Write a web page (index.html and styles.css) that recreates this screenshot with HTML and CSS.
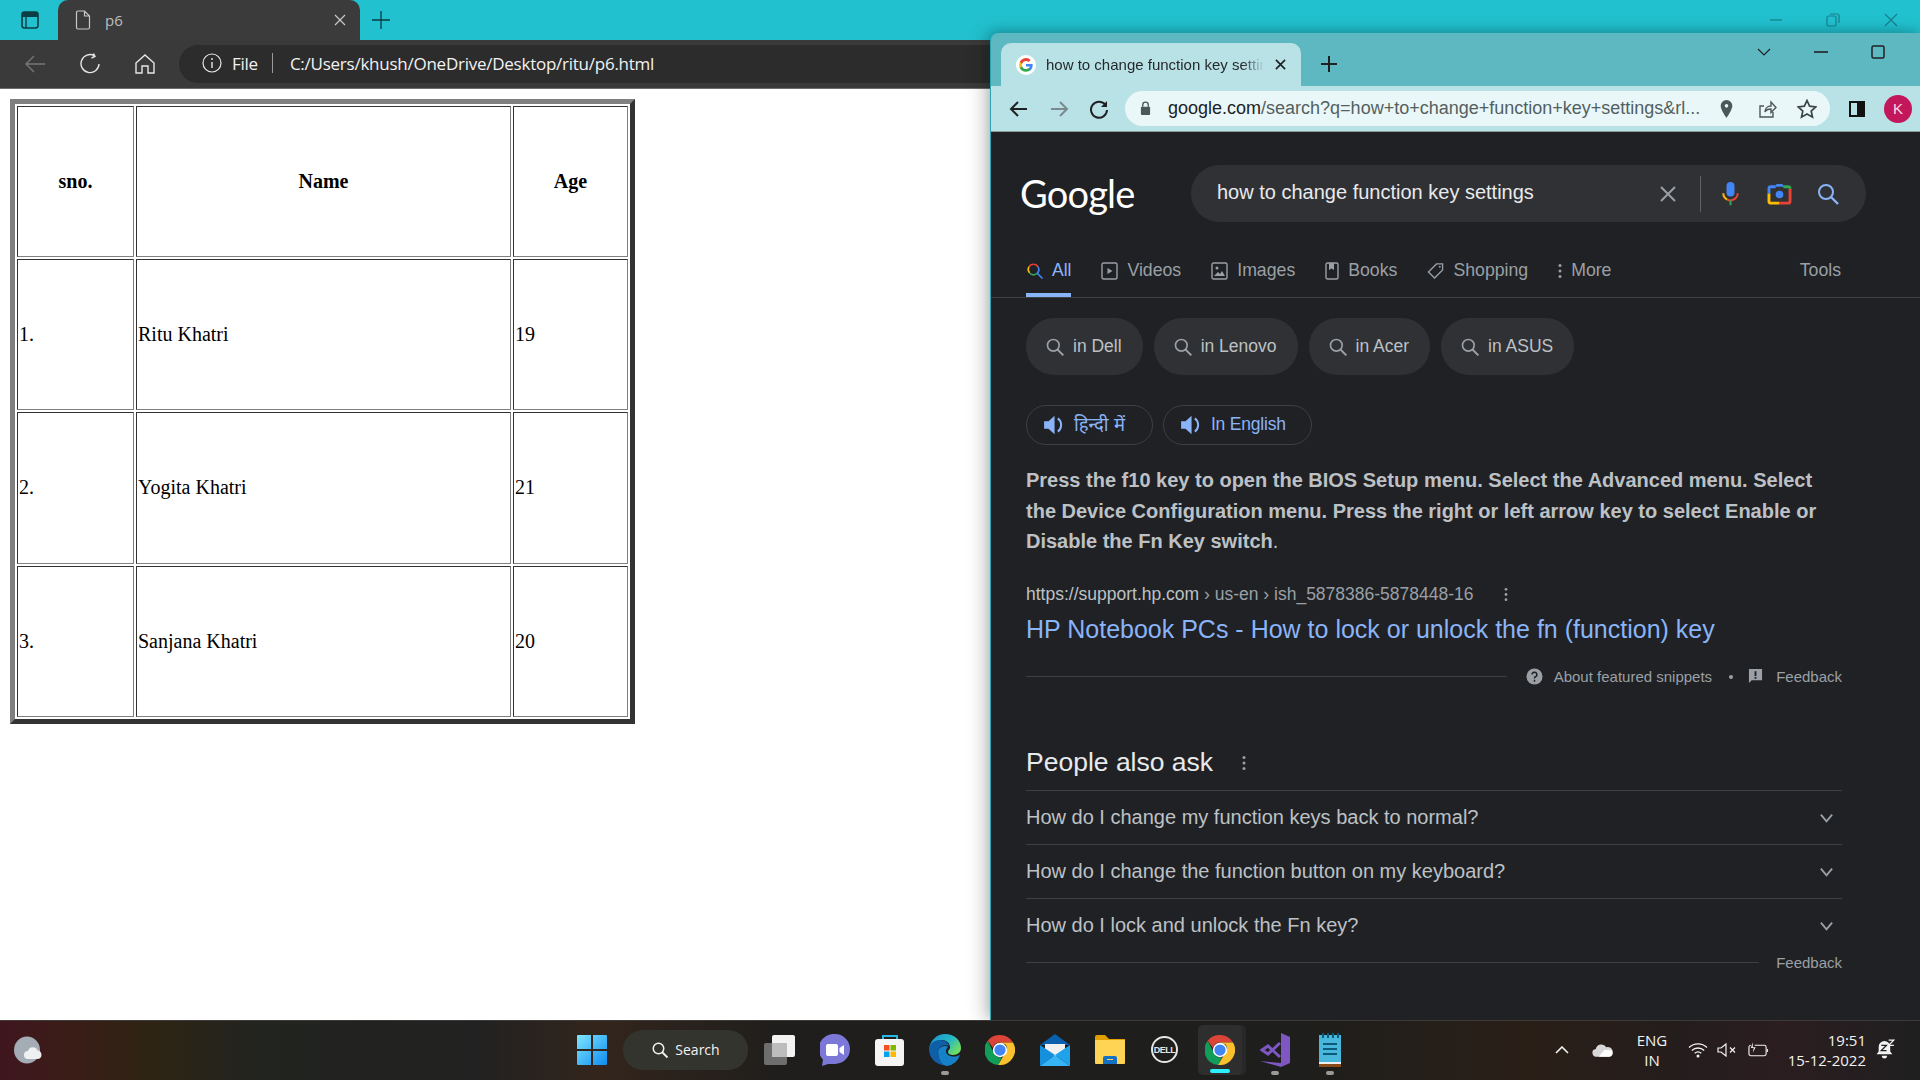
FILE: index.html
```html
<!DOCTYPE html>
<html lang="en">
<head>
<meta charset="utf-8">
<title>p6</title>
<link rel="stylesheet" href="styles.css">
</head>
<body>
<svg class="defs" width="0" height="0">
  <symbol id="chrome" viewBox="0 0 48 48">
    <path fill="#db4437" d="M24 0a24 24 0 0 1 20.8 12H24a12 12 0 0 0-11.4 8.3L4.4 9A24 24 0 0 1 24 0z"/>
    <path fill="#0f9d58" d="M4.4 9l10.2 21A12 12 0 0 0 27 35.6L21 48A24 24 0 0 1 4.4 9z"/>
    <path fill="#fbc02d" d="M44.8 12A24 24 0 0 1 21 47.8L31.4 30A12 12 0 0 0 33 15l-9-3z"/>
    <circle cx="24" cy="24" r="11.5" fill="#fff"/>
    <circle cx="24" cy="24" r="9" fill="#4285f4"/>
  </symbol>
  <symbol id="mag" viewBox="0 0 24 24">
    <circle cx="10" cy="10" r="7" fill="none" stroke="currentColor" stroke-width="2"/>
    <path d="M15 15l7 7" fill="none" stroke="currentColor" stroke-width="2.4"/>
  </symbol>
  <symbol id="spk" viewBox="0 0 20 20">
    <path fill="currentColor" d="M1 6.500h4l5.500-5v17l-5.500-5H1z"/>
    <path fill="none" stroke="currentColor" stroke-width="1.800" d="M13.500 4a7.500 7.500 0 0 1 0 12"/>
  </symbol>
  <symbol id="chev" viewBox="0 0 16 16">
    <path fill="none" stroke="currentColor" stroke-width="2" d="M2 5l6 7 6-7"/>
  </symbol>
  <symbol id="kebab" viewBox="0 0 4 16">
    <circle cx="2" cy="2.5" r="1.5" fill="currentColor"/><circle cx="2" cy="8" r="1.5" fill="currentColor"/><circle cx="2" cy="13.5" r="1.5" fill="currentColor"/>
  </symbol>
</svg>

<div class="desktop">
  <div class="main">
    <header class="ltabs">
      <svg class="l-side" viewBox="0 0 18 18" width="18" height="18"><rect x="1" y="1" width="16" height="16" rx="2.5" fill="none" stroke="#0c3d44" stroke-width="1.6"/><path d="M1 3.500a2.500 2.500 0 0 1 2.500-2.500h11a2.500 2.500 0 0 1 2.500 2.500V6H1z" fill="#0c3d44"/><path d="M5 6v11" stroke="#0c3d44" stroke-width="1.4"/></svg>
      <div class="ltab">
        <svg viewBox="0 0 16 20" width="16" height="20"><path d="M1.500 2.500a1.500 1.500 0 0 1 1.500-1.500h6.500l5 5v11.500a1.500 1.500 0 0 1-1.500 1.500H3a1.500 1.500 0 0 1-1.500-1.500z M9.500 1v5h5" fill="none" stroke="#c8c8c8" stroke-width="1.200"/></svg>
        <span class="ltab-title">p6</span>
        <svg class="ltab-x" viewBox="0 0 12 12" width="12" height="12"><path d="M1 1l10 10M11 1L1 11" stroke="#c8c8c8" stroke-width="1.200"/></svg>
      </div>
      <svg class="l-plus" viewBox="0 0 18 18" width="18" height="18"><path d="M9 0v18M0 9h18" stroke="#0c3d44" stroke-width="1.300"/></svg>
    </header>
    <nav class="lbar">
      <svg class="l-ic" viewBox="0 0 22 22" width="22" height="22"><path d="M21 11H2M10 3l-8 8 8 8" fill="none" stroke="#777" stroke-width="1.400"/></svg>
      <svg class="l-ic" viewBox="0 0 22 22" width="22" height="22"><path d="M15.500 2.800A9 9 0 1 0 20 11M14.500 0.500l1.500 3-3.500 1.500" fill="none" stroke="#e6e6e6" stroke-width="1.400"/></svg>
      <svg class="l-ic" viewBox="0 0 22 22" width="22" height="22"><path d="M2 10l9-8 9 8v10h-6v-7H8v7H2z" fill="none" stroke="#e6e6e6" stroke-width="1.400"/></svg>
      <div class="lpill">
        <svg viewBox="0 0 20 20" width="20" height="20"><circle cx="10" cy="10" r="9" fill="none" stroke="#e6e6e6" stroke-width="1.200"/><path d="M10 9v6M10 5v2" stroke="#e6e6e6" stroke-width="1.400"/></svg>
        <span class="lfile">File</span>
        <span class="lsep"></span>
        <span class="lurl">C:/Users/khush/OneDrive/Desktop/ritu/p6.html</span>
      </div>
    </nav>
    <main class="lpage">
      <table class="sheet">
        <colgroup><col class="c1"><col class="c2"><col class="c3"></colgroup>
        <tr><th>sno.</th><th>Name</th><th>Age</th></tr>
        <tr><td>1.</td><td>Ritu Khatri</td><td>19</td></tr>
        <tr><td>2.</td><td>Yogita Khatri</td><td>21</td></tr>
        <tr><td>3.</td><td>Sanjana Khatri</td><td>20</td></tr>
      </table>
    </main>

    <div class="caption-btns">
      <svg viewBox="0 0 12 12" width="12" height="12"><path d="M0 6h12" stroke="#14808c" stroke-width="1.200"/></svg>
      <svg viewBox="0 0 14 14" width="14" height="14"><rect x="1" y="3" width="9" height="10" rx="1.500" fill="none" stroke="#14808c" stroke-width="1.200"/><path d="M4 1h7a2 2 0 0 1 2 2v7" fill="none" stroke="#14808c" stroke-width="1.200"/></svg>
      <svg viewBox="0 0 14 14" width="14" height="14"><path d="M1 1l12 12M13 1L1 13" stroke="#14808c" stroke-width="1.200"/></svg>
    </div>

    <section class="gwin">
      <div class="gstrip">
        <div class="gtab">
          <svg viewBox="0 0 24 24" width="20" height="20"><circle cx="12" cy="12" r="12" fill="#fff"/><path fill="#4285f4" d="M20 12.300c0-.6-.1-1.100-.2-1.600H12v3h4.500a3.800 3.800 0 0 1-1.700 2.500v2h2.700c1.600-1.400 2.500-3.500 2.500-5.900z"/><path fill="#34a853" d="M12 20c2.200 0 4-.7 5.500-2l-2.700-2a5 5 0 0 1-7.500-2.600H4.600v2.100A8 8 0 0 0 12 20z"/><path fill="#fbbc05" d="M7.300 13.400a4.800 4.800 0 0 1 0-3V8.300H4.600a8 8 0 0 0 0 7.200z"/><path fill="#ea4335" d="M12 7.200c1.200 0 2.300.4 3.100 1.200l2.400-2.400A8 8 0 0 0 4.600 8.300l2.700 2.100A4.800 4.800 0 0 1 12 7.200z"/></svg>
          <span class="gtab-title">how to change function key settings</span>
          <svg class="gtab-x" viewBox="0 0 12 12" width="11" height="11"><path d="M1 1l10 10M11 1L1 11" stroke="#202124" stroke-width="1.800"/></svg>
        </div>
        <svg class="g-plus" viewBox="0 0 16 16" width="16" height="16"><path d="M8 0v16M0 8h16" stroke="#202124" stroke-width="2"/></svg>
        <div class="g-caption">
          <svg viewBox="0 0 14 8" width="14" height="8"><path d="M1 1l6 6 6-6" fill="none" stroke="#202124" stroke-width="1.200"/></svg>
          <svg viewBox="0 0 14 2" width="14" height="2"><path d="M0 1h14" stroke="#202124" stroke-width="1.600"/></svg>
          <svg viewBox="0 0 14 14" width="14" height="14"><rect x="1" y="1" width="12" height="12" rx="1.500" fill="none" stroke="#202124" stroke-width="1.500"/></svg>
        </div>
      </div>
      <div class="gbar">
        <svg viewBox="0 0 20 20" width="20" height="20"><path d="M18 10H3M9 3l-7 7 7 7" fill="none" stroke="#202124" stroke-width="2"/></svg>
        <svg viewBox="0 0 20 20" width="20" height="20"><path d="M2 10h15M11 3l7 7-7 7" fill="none" stroke="#7c8a8d" stroke-width="2"/></svg>
        <svg viewBox="0 0 20 20" width="20" height="20"><path d="M16.500 6A8 8 0 1 0 18 11" fill="none" stroke="#202124" stroke-width="2"/><path d="M18 2v6h-6z" fill="#202124"/></svg>
        <div class="gomni">
          <svg viewBox="0 0 12 16" width="11" height="15"><rect x="1" y="6" width="10" height="9" rx="1" fill="#4c5759"/><path d="M3 6V4a3 3 0 0 1 6 0v2" fill="none" stroke="#4c5759" stroke-width="1.500"/></svg>
          <span class="gurl"><b>google.com</b>/search?q=how+to+change+function+key+settings&amp;rl...</span>
          <svg class="gpin" viewBox="0 0 14 20" width="13" height="18"><path fill-rule="evenodd" fill="#4c5759" d="M7 0a6.500 6.500 0 0 1 6.500 6.500C13.500 11 7 20 7 20S.5 11 .5 6.500A6.500 6.500 0 0 1 7 0zm0 4.500a2 2 0 1 0 0 4 2 2 0 0 0 0-4z"/></svg>
          <svg class="gshare" viewBox="0 0 20 20" width="20" height="20"><path d="M16 13v5H3V7h4M8 13c0-4 3-6 6-6V3l5 5.500-5 5V10c-3 0-5 1-6 3z" fill="none" stroke="#4c5759" stroke-width="1.400"/></svg>
          <svg viewBox="0 0 20 20" width="20" height="20"><path d="M10 1.500l2.600 5.700 6.200.7-4.600 4.200 1.300 6.100L10 15.100l-5.500 3.100 1.300-6.100L1.200 7.900l6.200-.7z" fill="none" stroke="#3b4547" stroke-width="1.700"/></svg>
        </div>
        <svg class="g-sidep" viewBox="0 0 18 18" width="18" height="18"><path fill-rule="evenodd" d="M1 1h16v16H1zM3 3v12h6V3z" fill="#111"/></svg>
        <span class="avatar">K</span>
      </div>
      <div class="gpage">
        <div class="g-head">
          <span class="logo">Google</span>
          <div class="gsearch">
            <span class="q">how to change function key settings</span>
            <svg viewBox="0 0 16 16" width="16" height="16"><path d="M1 1l14 14M15 1L1 15" stroke="#9aa0a6" stroke-width="2"/></svg>
            <span class="qsep"></span>
            <svg class="s-mic" viewBox="0 0 20 30" width="17" height="24"><rect x="5" y="0" width="10" height="18" rx="5" fill="#4285f4"/><path d="M1 14a9 9 0 0 0 5 8" fill="none" stroke="#fbbc05" stroke-width="2.500"/><path d="M6 22a9 9 0 0 0 4 1" fill="none" stroke="#ea4335" stroke-width="2.500"/><path d="M10 23a9 9 0 0 0 9-9" fill="none" stroke="#ea4335" stroke-width="2.500"/><path d="M10 23v6" stroke="#34a853" stroke-width="2.500"/></svg>
            <svg class="s-cam" viewBox="0 0 26 24" width="25" height="23"><path d="M2 12V7a2 2 0 0 1 2-2h5" fill="none" stroke="#4285f4" stroke-width="3"/><path d="M2 12v8a2 2 0 0 0 2 2h9" fill="none" stroke="#fbbc05" stroke-width="3"/><path d="M13 22h9a2 2 0 0 0 2-2V7" fill="none" stroke="#ea4335" stroke-width="3"/><path d="M24 7a2 2 0 0 0-2-2h-5" fill="none" stroke="#34a853" stroke-width="3"/><path d="M8 5l2-3h6l2 3z" fill="#4285f4"/><circle cx="13" cy="13" r="4" fill="#4285f4"/></svg>
            <svg class="s-mag" viewBox="0 0 24 24" width="24" height="24"><use href="#mag"/></svg>
          </div>
        </div>
        <div class="g-tabs">
          <span class="gt active">
            <svg viewBox="0 0 24 24" width="18" height="18"><path d="M10 3a7 7 0 0 1 6 3.500" fill="none" stroke="#ea4335" stroke-width="2.200"/><path d="M4 6.500A7 7 0 0 1 10 3" fill="none" stroke="#ea4335" stroke-width="2.200"/><path d="M3.900 6.500a7 7 0 0 0 1 8" fill="none" stroke="#fbbc05" stroke-width="2.200"/><path d="M5 15a7 7 0 0 0 10 0" fill="none" stroke="#34a853" stroke-width="2.200"/><path d="M16 6.500a7 7 0 0 1-1 8.500l7 7" fill="none" stroke="#4285f4" stroke-width="2.200"/></svg>
            All
          </span>
          <span class="gt"><svg viewBox="0 0 17 18" width="17" height="18"><rect x="1" y="1" width="15" height="16" rx="1.500" fill="none" stroke="currentColor" stroke-width="1.400"/><path d="M6.500 6l5 3-5 3z" fill="currentColor"/></svg>Videos</span>
          <span class="gt"><svg viewBox="0 0 17 18" width="17" height="18"><rect x="1" y="1" width="15" height="16" rx="1.500" fill="none" stroke="currentColor" stroke-width="1.400"/><circle cx="6" cy="6" r="1.500" fill="currentColor"/><path d="M3 14l4-4 2 2 2-3 3 5z" fill="currentColor"/></svg>Images</span>
          <span class="gt"><svg viewBox="0 0 14 18" width="14" height="18"><rect x="1" y="1" width="12" height="16" rx="1.500" fill="none" stroke="currentColor" stroke-width="1.400"/><path d="M4 1h5v7L6.500 6.500 4 8z" fill="currentColor"/></svg>Books</span>
          <span class="gt"><svg viewBox="0 0 18 18" width="17" height="18"><path d="M10 1.500h6.500V8L8 16.500 1.500 10z" fill="none" stroke="currentColor" stroke-width="1.400"/><circle cx="13.500" cy="4.500" r="1" fill="currentColor"/></svg>Shopping</span>
          <span class="gt"><svg viewBox="0 0 4 16" width="4" height="16"><use href="#kebab"/></svg>More</span>
          <span class="gt tools">Tools</span>
        </div>
        <div class="chips">
          <span class="chip"><svg viewBox="0 0 24 24" width="20" height="20"><use href="#mag"/></svg>in Dell</span>
          <span class="chip"><svg viewBox="0 0 24 24" width="20" height="20"><use href="#mag"/></svg>in Lenovo</span>
          <span class="chip"><svg viewBox="0 0 24 24" width="20" height="20"><use href="#mag"/></svg>in Acer</span>
          <span class="chip"><svg viewBox="0 0 24 24" width="20" height="20"><use href="#mag"/></svg>in ASUS</span>
        </div>
        <div class="listen">
          <span class="lchip"><svg viewBox="0 0 20 20" width="22" height="22"><use href="#spk"/></svg><span class="hi">हिन्दी में</span></span>
          <span class="lchip"><svg viewBox="0 0 20 20" width="22" height="22"><use href="#spk"/></svg>In English</span>
        </div>
        <p class="snippet"><b>Press the f10 key to open the BIOS Setup menu. Select the Advanced menu. Select the Device Configuration menu. Press the right or left arrow key to select Enable or Disable the Fn Key switch</b>.</p>
        <div class="cite"><span class="host">https://support.hp.com</span> › us-en › ish_5878386-5878448-16<svg viewBox="0 0 4 16" width="4" height="15"><use href="#kebab"/></svg></div>
        <a class="title">HP Notebook PCs - How to lock or unlock the fn (function) key</a>
        <div class="about">
          <span class="rule"></span>
          <svg viewBox="0 0 18 18" width="17" height="17"><circle cx="9" cy="9" r="8.500" fill="#9aa0a6"/><path d="M6.500 7a2.500 2.500 0 1 1 3.500 2.300c-.7.300-1 .7-1 1.700M9 12.500v2" fill="none" stroke="#202124" stroke-width="1.600"/></svg>
          <span class="ab-t">About featured snippets</span>
          <span class="ab-dot"></span>
          <svg viewBox="0 0 16 18" width="15" height="17"><path fill-rule="evenodd" fill="#9aa0a6" d="M1 1h14v12H4l-3 3zM7 3.500v5h2v-5zM7 9.500v2h2v-2z"/></svg>
          <span class="ab-t fb">Feedback</span>
        </div>
        <div class="paa-head"><span class="paa-t">People also ask</span><svg viewBox="0 0 4 16" width="4" height="16"><use href="#kebab"/></svg></div>
        <div class="q-row">How do I change my function keys back to normal?<svg viewBox="0 0 16 16" width="15" height="15"><use href="#chev"/></svg></div>
        <div class="q-row">How do I change the function button on my keyboard?<svg viewBox="0 0 16 16" width="15" height="15"><use href="#chev"/></svg></div>
        <div class="q-row last">How do I lock and unlock the Fn key?<svg viewBox="0 0 16 16" width="15" height="15"><use href="#chev"/></svg></div>
        <div class="paa-foot"><span class="rule"></span><span class="ab-t">Feedback</span></div>
      </div>
    </section>
  </div>

  <footer class="taskbar">
    <svg class="weather" viewBox="0 0 30 28" width="30" height="28"><ellipse cx="13" cy="14" rx="13" ry="13.500" fill="#a4adb5"/><path d="M14 23a4 4 0 0 1 0-8 5 5 0 0 1 9.500-.5A4.300 4.300 0 0 1 24 23z" fill="#eef0f2"/></svg>
    <svg class="start" viewBox="0 0 30 30" width="30" height="30"><defs><linearGradient id="w" x1="0" y1="0" x2="1" y2="1"><stop offset="0" stop-color="#7ee6ff"/><stop offset="1" stop-color="#0f8cf0"/></linearGradient></defs><path fill="url(#w)" d="M0 1a1 1 0 0 1 1-1h13v14H0zM16 0h13a1 1 0 0 1 1 1v13H16zM0 16h14v14H1a1 1 0 0 1-1-1zM16 16h14v13a1 1 0 0 1-1 1H16z"/></svg>
    <div class="t-search"><svg viewBox="0 0 24 24" width="18" height="18"><use href="#mag"/></svg>Search</div>
    <div class="t-apps">
      <span class="app"><svg viewBox="0 0 32 30" width="32" height="30"><rect x="0" y="8" width="23" height="22" rx="2" fill="#6e6e6e"/><rect x="8" y="0" width="23" height="22" rx="2" fill="#f3f3f3"/><rect x="8" y="8" width="15" height="14" fill="#bdbdbd"/></svg></span>
      <span class="app"><svg viewBox="0 0 30 32" width="30" height="32"><path fill="#7b78d8" d="M15 0a15 15 0 0 1 0 30H8l-6 2 1-6.500A15 15 0 0 1 15 0z"/><rect x="6" y="10" width="12" height="12" rx="2" fill="#fff"/><path d="M19.500 14l4.500-3v10l-4.500-3z" fill="#fff"/></svg></span>
      <span class="app"><svg viewBox="0 0 30 32" width="30" height="32"><path d="M8 6V2h14v4" fill="none" stroke="#29b6e8" stroke-width="2"/><rect x="0" y="5" width="29" height="27" rx="3" fill="#f5f5f5"/><rect x="9" y="11" width="5.500" height="5.500" fill="#f25022"/><rect x="15.500" y="11" width="5.500" height="5.500" fill="#7fba00"/><rect x="9" y="17.500" width="5.500" height="5.500" fill="#00a4ef"/><rect x="15.500" y="17.500" width="5.500" height="5.500" fill="#ffb900"/></svg></span>
      <span class="app on-dot"><svg viewBox="0 0 32 32" width="32" height="32"><defs><linearGradient id="e" x1="0" y1="0" x2="1" y2="0.600"><stop offset="0" stop-color="#1d8fd8"/><stop offset="0.600" stop-color="#23b8c6"/><stop offset="1" stop-color="#6fdc66"/></linearGradient></defs><path fill="url(#e)" d="M16 0c9 0 16 6 16 14 0 4-3 7-8 7-3 0-5-1-5-3 0-2 2-2 2-5 0-4-4-7-8-7-6 0-11 4-13 9C1.500 6 8 0 16 0z"/><path fill="#0f5fa8" d="M0 16C0 10 5 6 11 6c4 0 8 2 9 6-5-2-10 0-11 5-1 5 2 10 7 13 0 0 1 1 3 1A16 16 0 0 1 0 16z"/><path fill="#1680c8" d="M9 18c0-4 4-6 7-6 1 0 2 .3 3 .8-.5 1.500-2 2.200-2 4.200 0 4 4 5.500 8 5.500 2 0 4-.5 6-2A16 16 0 0 1 18 32c-5-1-9-7-9-14z"/></svg></span>
      <span class="app"><svg viewBox="0 0 30 30" width="30" height="30"><use href="#chrome"/></svg></span>
      <span class="app"><svg viewBox="0 0 30 32" width="30" height="32"><path fill="#0a5fae" d="M15 0l15 11H0z"/><path fill="#f1f1f1" d="M5 10h20v8l-10 5-10-5z"/><path fill="#1490dc" d="M0 11l15 10L0 32z"/><path fill="#1ea2ea" d="M30 11L15 21l15 11z"/><path fill="#36b4f5" d="M0 32l15-11 15 11z"/></svg></span>
      <span class="app"><svg viewBox="0 0 30 30" width="30" height="30"><path fill="#e0a100" d="M0 2a2 2 0 0 1 2-2h8l4 4h16v8H0z"/><path fill="#ffd454" d="M0 5h30v23a1 1 0 0 1-1 1H1a1 1 0 0 1-1-1z"/><path fill="#1471c4" d="M8 29v-6a2 2 0 0 1 2-2h10a2 2 0 0 1 2 2v6zM12 24v1h6v-1z"/></svg></span>
      <span class="app"><span class="dell"><span class="dell-t">DELL</span></span></span>
      <span class="app running"><svg viewBox="0 0 30 30" width="30" height="30"><use href="#chrome"/></svg></span>
      <span class="app on-dot"><svg viewBox="0 0 30 34" width="30" height="34"><path fill="#7e57c2" d="M21 0l9 4v26l-9 4L0 28l21 2z"/><path d="M20 10L8 21l-6-4 6-4 12 11" fill="none" stroke="#7e57c2" stroke-width="3"/></svg></span>
      <span class="app on-dot"><svg viewBox="0 0 22 34" width="22" height="34"><rect x="0" y="2" width="22" height="32" fill="#8a4b1a"/><rect x="0" y="2" width="22" height="29" fill="#49b7dc"/><rect x="0" y="29" width="22" height="2" fill="#eee"/><path d="M4 0v5M9 0v5M14 0v5M19 0v5" stroke="#0d5a78" stroke-width="2"/><path d="M4 11h14M4 16h14M4 21h14" stroke="#0d5a78" stroke-width="2"/></svg></span>
    </div>
    <div class="tray">
      <svg class="tr-up" viewBox="0 0 14 8" width="14" height="8"><path d="M1 7l6-6 6 6" fill="none" stroke="#f2f2f2" stroke-width="1.600"/></svg>
      <svg class="tr-cloud" viewBox="0 0 22 14" width="21" height="14"><path d="M5 14a4 4 0 0 1-1-8A6 6 0 0 1 15 4a4.500 4.500 0 0 1 3 10z" fill="#d8d8d8"/><path d="M7 14l6-7 5 0a3 3 0 0 1 0 7z" fill="#fff"/></svg>
      <span class="lang">ENG<br>IN</span>
      <svg class="tr-wifi" viewBox="0 0 20 16" width="20" height="16"><path d="M1 5.500a13 13 0 0 1 18 0M3.800 8.500a9 9 0 0 1 12.400 0M6.700 11.300a5 5 0 0 1 6.600 0" fill="none" stroke="#f2f2f2" stroke-width="1.300"/><circle cx="10" cy="14" r="1.500" fill="#f2f2f2"/></svg>
      <svg class="tr-vol" viewBox="0 0 20 14" width="20" height="14"><path d="M1 5h3l5-4v12l-5-4H1z" fill="none" stroke="#f2f2f2" stroke-width="1.200"/><path d="M13 4.500l5 5M18 4.500l-5 5" stroke="#f2f2f2" stroke-width="1.200"/></svg>
      <svg class="tr-bat" viewBox="0 0 22 16" width="21" height="16"><path d="M7 3h10a2 2 0 0 1 2 2v7a2 2 0 0 1-2 2H3a2 2 0 0 1-2-2V5a2 2 0 0 1 2-2" fill="none" stroke="#f2f2f2" stroke-width="1.200"/><path d="M20 7h1v3h-1z" fill="#f2f2f2"/><path d="M5 0L3 6h3l-1 5 3-6H5z" fill="#f2f2f2"/></svg>
      <span class="clock">19:51<br>15-12-2022</span>
      <svg class="tr-bell" viewBox="0 0 18 20" width="19" height="21"><path d="M8 2a5.500 5.500 0 0 1 5.500 5.500V12l2 2.500H.5L2.500 12V7.500A5.500 5.500 0 0 1 8 2z" fill="#f2f2f2"/><path d="M5.500 16h5a2.500 2.500 0 0 1-5 0z" fill="#f2f2f2"/><path d="M5 6h5l-5 5h5" fill="none" stroke="#1f1f1f" stroke-width="1.200"/><path d="M12 1h5l-5 5h5" fill="none" stroke="#f2f2f2" stroke-width="1.200"/></svg>
    </div>
  </footer>
</div>
</body>
</html>
```

FILE: styles.css
```css
* { box-sizing: border-box; }
html, body { margin: 0; height: 100%; overflow: hidden; }
body { font-family: "Liberation Sans", Arial, sans-serif; background: #fff; }
.defs { display: block; position: absolute; }
svg { flex: none; display: block; }

.desktop { height: 1080px; display: flex; flex-direction: column; }
.main { flex: 1; position: relative; display: flex; flex-direction: column; min-height: 0; }

/* back window */
.ltabs { height: 40px; background: #22c1cf; display: flex; align-items: center; padding-left: 21px; }
.ltab { margin-left: 19px; width: 302px; height: 40px; background: #3b3b3b; border-radius: 10px 10px 0 0; display: flex; align-items: center; padding-left: 17px; }
.ltab-title { margin-left: 14px; color: #bdbdbd; font: 15px "Open Sans", sans-serif; }
.ltab-x { margin-left: auto; margin-right: 14px; }
.l-plus { margin-left: 12px; }
.lbar { height: 49px; background: #3a3a3a; border-bottom: 1px solid #6d6d6d; display: flex; align-items: center; padding: 0 0 0 24px; gap: 33px; }
.lpill { margin-left: -10px; width: 830px; height: 38px; border-radius: 19px; background: #2c2c2c; display: flex; align-items: center; padding: 0 0 2px 23px; color: #f2f2f2; font: 17px "Open Sans", sans-serif; letter-spacing: -0.250px; }
.lfile { margin-left: 10px; }
.lsep { width: 1px; height: 20px; background: #9a9a9a; margin: 0 17px 0 14px; }
.lpage { flex: 1; padding: 10px; }
.sheet { table-layout: fixed; width: 625px; border-collapse: separate; border-spacing: 2px; border: 5px solid; border-color: #808080 #333 #333 #808080; font: 20px "Liberation Serif", "Times New Roman", serif; color: #000; }
.c1 { width: 117px; } .c2 { width: 375px; } .c3 { width: 115px; }
.sheet th, .sheet td { height: 151.200px; padding: 1px; border: 1px solid; border-color: #333 #808080 #808080 #333; }
.sheet th { text-align: center; font-weight: bold; }
.sheet td { text-align: left; }

.caption-btns { position: absolute; top: 13px; left: 1770px; display: flex; align-items: center; gap: 44px; }

/* front window */
.gwin { position: absolute; left: 990px; top: 33px; right: 0; bottom: 0; display: flex; flex-direction: column; border-radius: 8px 0 0 0; border-left: 1px solid #2aa4b0; box-shadow: -6px 0 18px rgba(0,0,0,.22), 0 -3px 8px rgba(0,80,90,.18); }
.gstrip { height: 53px; background: #5db8c1; border-radius: 8px 0 0 0; display: flex; align-items: flex-start; padding-left: 10px; position: relative; }
.gtab { margin-top: 10px; width: 300px; height: 43px; background: #b9e2e7; border-radius: 10px 10px 0 0; display: flex; align-items: center; padding: 0 15px 0 15px; }
.gtab-title { margin-left: 10px; width: 218px; overflow: hidden; white-space: nowrap; font-size: 15px; color: #26292b; -webkit-mask-image: linear-gradient(90deg, #000 90%, transparent); mask-image: linear-gradient(90deg, #000 90%, transparent); }
.gtab-x { margin-left: auto; }
.g-plus { margin: 23px 0 0 20px; }
.g-caption { margin: 12px 0 0 auto; display: flex; align-items: center; gap: 43px; padding-right: 35px; height: 14px; }
.gbar { height: 46px; background: #b9e2e7; border-bottom: 1px solid #8d9a9c; display: flex; align-items: center; padding-left: 18px; gap: 20px; }
.gomni { margin-left: -4px; width: 705px; height: 35px; border-radius: 18px; background: #eaf7f8; display: flex; align-items: center; padding-left: 15px; gap: 20px; }
.gurl { margin-left: -3px; width: 532px; white-space: nowrap; font-size: 18px; color: #53605f; }
.gurl b { font-weight: normal; color: #202124; }
.gshare { margin-left: 4px; }
.g-sidep { margin-left: -2px; }
.avatar { margin-left: -2px; width: 28px; height: 28px; border-radius: 50%; background: #c2185b; color: #f6dce6; font-size: 15px; display: flex; align-items: center; justify-content: center; }

.gpage { flex: 1; background: #202124; display: flex; flex-direction: column; min-height: 0; color: #bdc1c6; }
.g-head { padding: 33px 54px 0 29px; display: flex; align-items: center; }
.logo { width: 171px; font: 38px/57px Lato, sans-serif; color: #fff; letter-spacing: -0.800px; }
.gsearch { flex: 1; height: 57px; border-radius: 29px; background: #303134; display: flex; align-items: center; padding-left: 26px; color: #e8eaed; font-size: 20px; }
.q { width: 443px; padding-bottom: 2px; }
.gsearch > svg { color: #8ab4f8; }
.qsep { width: 1px; height: 36px; background: #5f6368; margin: 0 21px 0 24px; }
.s-cam { margin-left: 28px; }
.s-mag { margin-left: 24px; }

.g-tabs { margin-top: 0; height: 76px; border-bottom: 1px solid #3c4043; display: flex; align-items: center; padding: 22px 79px 0 35px; gap: 30px; color: #9aa0a6; font-size: 17.700px; }
.gt { height: 53px; display: flex; align-items: center; gap: 9px; }
.gt.active { color: #8ab4f8; border-bottom: 4px solid #8ab4f8; padding-top: 4px; gap: 8px; font-size: 17.500px; }
.tools { margin-left: auto; }

.chips { margin: 20px 0 0 35px; display: flex; gap: 11px; }
.chip { height: 57px; padding: 0 21px 0 19px; border-radius: 28px; background: #303134; display: flex; align-items: center; gap: 8px; font-size: 17.500px; color: #bdc1c6; }
.chip svg { color: #9aa0a6; }
.listen { margin: 30px 0 0 35px; display: flex; gap: 10px; }
.lchip { height: 40px; padding: 0 25px 2px 16px; border: 1px solid #3c4043; border-radius: 20px; display: flex; align-items: center; gap: 9px; font-size: 17.500px; color: #8ab4f8; letter-spacing: -0.200px; }
.lchip svg { margin-top: 2px; }
.hi { font-family: "DejaVu Sans", "Noto Sans", sans-serif; font-size: 18.500px; margin: 0 2px 2px 0; }
.snippet { margin: 20px 77px 0 35px; font-size: 20px; line-height: 30.500px; color: #bdc1c6; }
.snippet b { color: #bdc1c6; }
.cite { margin: 27px 0 0 35px; height: 22px; display: flex; align-items: center; font-size: 17.500px; color: #9aa0a6; white-space: pre; }
.host { color: #bdc1c6; }
.cite svg { margin-left: 30px; }
.title { margin: 7px 0 0 35px; font-size: 25px; line-height: 32px; color: #8ab4f8; }
.about { margin: 17px 78px 0 35px; height: 30px; display: flex; align-items: center; }
.rule { flex: 1; height: 1px; background: #3c4043; }
.ab-t { font-size: 15px; color: #9aa0a6; }
.about > svg:first-of-type { margin: 0 11px 0 19px; }
.ab-dot { width: 4px; height: 4px; border-radius: 50%; background: #9aa0a6; margin: 0 15px 0 17px; }
.fb { margin-left: 13px; }
.paa-head { margin: 46px 78px 0 35px; height: 53px; display: flex; align-items: center; gap: 29px; border-bottom: 1px solid #3c4043; padding-bottom: 2px; color: #9aa0a6; }
.paa-t { font-size: 26.500px; color: #e8eaed; }
.q-row { margin: 0 78px 0 35px; height: 54px; display: flex; align-items: center; justify-content: space-between; border-bottom: 1px solid #3c4043; font-size: 20px; color: #bdc1c6; padding-right: 8px; }
.q-row svg { color: #9aa0a6; }
.q-row.last { border-bottom: 0; }
.paa-foot { margin: 1px 78px 0 35px; display: flex; align-items: center; gap: 17px; }

/* taskbar */
.taskbar { height: 60px; flex: none; position: relative; display: flex; align-items: center; padding: 0 0 2px 14px; border-top: 1px solid #3d3a38; background: linear-gradient(90deg, #40161f 0, #3b1c18 60px, #2e2414 150px, #222420 260px, #222 480px, #33251c 600px, #1f1e1c 780px, #1e1e1c 1300px, #2a1f17 1530px, #241d1d 1680px, #2b1d20 1780px, #1f1f1f 1920px); color: #f2f2f2; }
.start { margin-left: 533px; }
.t-search { margin-left: 16px; width: 125px; height: 40px; border-radius: 20px; background: #34342f; display: flex; align-items: center; justify-content: center; gap: 6px; font: 14px "Open Sans", sans-serif; }
.t-apps { margin-left: 4px; display: flex; }
.app { position: relative; width: 55px; height: 50px; display: flex; align-items: center; justify-content: center; }
.on-dot::after { content: ""; position: absolute; left: 50%; bottom: 0; width: 8px; height: 4px; margin-left: -4px; border-radius: 2px; background: #9a9a9a; }
.running { background: #2e2e2e; border-radius: 5px; box-shadow: 4px 0 0 #282828; width: 44px; margin: 0 5.500px; }
.running::after { content: ""; position: absolute; left: 50%; bottom: 2px; width: 20px; height: 4px; margin-left: -10px; border-radius: 2px; background: #2cf0ff; }
.dell { width: 27px; height: 27px; border: 2px solid #e6e6e6; border-radius: 50%; display: flex; align-items: center; justify-content: center; }
.dell-t { color: #e6e6e6; font-size: 9px; font-weight: bold; letter-spacing: -0.500px; }
.tray { margin-left: auto; display: flex; align-items: center; }
.tr-up { margin-right: 23px; }
.lang { width: 50px; margin-left: 14px; margin-right: 11px; text-align: center; font: 15px/20px "Open Sans", sans-serif; }
.tr-vol { margin-left: 9px; }
.tr-bat { margin-left: 11px; }
.clock { margin-left: 14px; width: 83px; text-align: right; font: 15px/20px "Open Sans", sans-serif; }
.tr-bell { margin: 0 25px 0 10px; }
```
